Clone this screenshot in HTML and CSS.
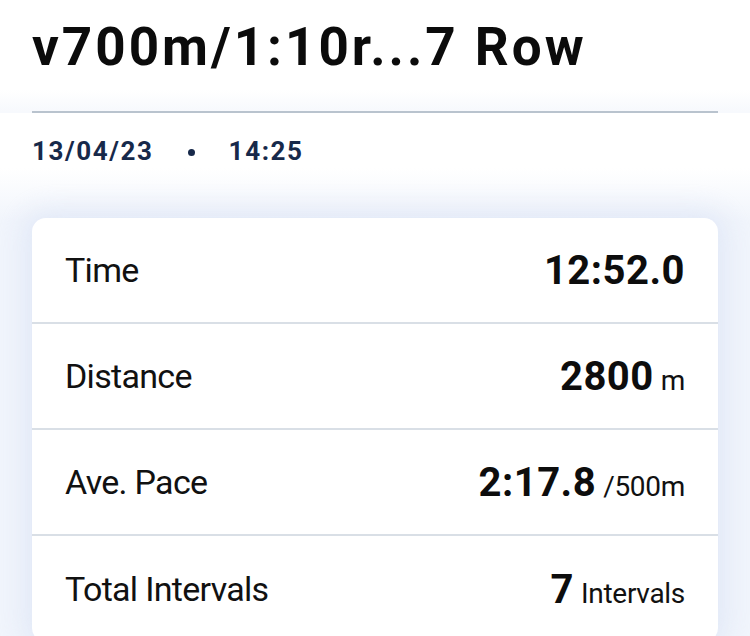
FILE: index.html
```html
<!DOCTYPE html>
<html>
<head>
<meta charset="utf-8">
<link rel="stylesheet" href="styles.css">
</head>
<body>
<div class="page">
  <header class="head">
    <h1 class="title">v700m/1:10r...7 Row</h1>
  </header>
  <section class="body">
    <div class="meta">
      <span>13/04/23</span>
      <span class="dot"></span>
      <span>14:25</span>
    </div>
    <div class="card">
      <div class="row">
        <span class="label">Time</span>
        <span class="value"><b>12:52.0</b></span>
      </div>
      <div class="row">
        <span class="label">Distance</span>
        <span class="value"><b>2800</b><small>m</small></span>
      </div>
      <div class="row">
        <span class="label">Ave. Pace</span>
        <span class="value"><b>2:17.8</b><small>/500m</small></span>
      </div>
      <div class="row">
        <span class="label">Total Intervals</span>
        <span class="value"><b>7</b><small>Intervals</small></span>
      </div>
    </div>
  </section>
</div>
</body>
</html>
```
FILE: styles.css
```css
* { box-sizing: border-box; }
html, body { margin: 0; padding: 0; }
body {
  width: 750px;
  height: 636px;
  overflow: hidden;
  background: #ffffff;
  font-family: Roboto, "Liberation Sans", sans-serif;
  color: #111;
}
.page {
  display: flex;
  flex-direction: column;
  height: 636px;
}
.head {
  background: linear-gradient(#ffffff 0px, #ffffff 90px, #f7f9fd 111px);
  padding: 16px 32px 0;
  height: 113px;
}
.title {
  margin: 0;
  font-size: 53px;
  font-weight: 700;
  line-height: 62px;
  letter-spacing: 3px;
  color: #0b0b0b;
  height: 97px;
  border-bottom: 2px solid #b9c3ce;
}
.body {
  flex: 1;
  padding: 19px 32px 0;
  background: linear-gradient(#ffffff 0px, #ffffff 55px, #f1f5fc 108px);
}
.meta {
  display: flex;
  align-items: center;
  gap: 34px;
  font-size: 26px;
  font-weight: 700;
  color: #17294a;
  letter-spacing: 1.6px;
  height: 38px;
  margin-bottom: 48px;
}
.dot {
  width: 7px;
  height: 7px;
  border-radius: 50%;
  background: #17294a;
  margin-top: 2px;
}
.card {
  background: #fff;
  border-radius: 14px;
  box-shadow: 0 0 28px 8px rgba(214, 224, 244, 0.6);
}
.row {
  display: flex;
  align-items: center;
  justify-content: space-between;
  height: 106px;
  padding: 0 33px 0 33px;
  border-bottom: 2px solid #d9dfe6;
}
.row:last-child { border-bottom: none; }
.label {
  font-size: 34px;
  font-weight: 400;
  letter-spacing: -0.7px;
  color: #111;
}
.value {
  display: flex;
  align-items: baseline;
}
.value b {
  font-size: 40px;
  font-weight: 700;
  letter-spacing: 0.5px;
  color: #0d0d0d;
}
.value small {
  font-size: 28px;
  margin-left: 7px;
  letter-spacing: -0.3px;
  color: #111;
}
```
